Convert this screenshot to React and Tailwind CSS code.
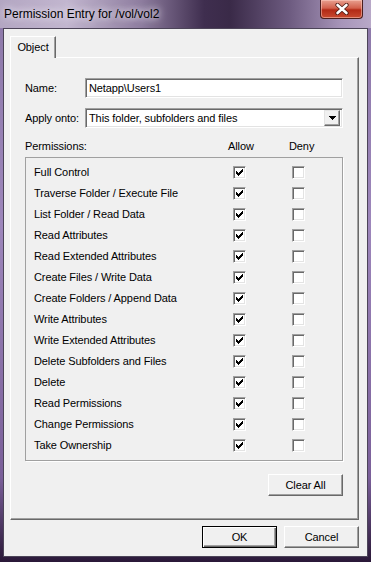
import React from "react";

const rows = [
  "Full Control",
  "Traverse Folder / Execute File",
  "List Folder / Read Data",
  "Read Attributes",
  "Read Extended Attributes",
  "Create Files / Write Data",
  "Create Folders / Append Data",
  "Write Attributes",
  "Write Extended Attributes",
  "Delete Subfolders and Files",
  "Delete",
  "Read Permissions",
  "Change Permissions",
  "Take Ownership",
];

// classic 7x7 check bitmap
const checkRows = [
  "......X",
  ".....XX",
  "X...XXX",
  "XX.XXX.",
  "XXXXX..",
  ".XXX...",
  "..X....",
];

function CheckBox({ checked }) {
  return (
    <div className="w-[13px] h-[13px] border border-t-[#a0a0a0] border-l-[#a0a0a0] border-r-white border-b-white bg-white shadow-[inset_1px_1px_0_#696969,inset_-1px_-1px_0_#e3e3e3] flex items-center justify-center">
      {checked && (
        <svg width="7" height="7" viewBox="0 0 7 7" shapeRendering="crispEdges">
          {checkRows.map((r, y) =>
            r.split("").map((c, x) =>
              c === "X" ? <rect key={`${x}-${y}`} x={x} y={y} width="1" height="1" fill="#000" /> : null
            )
          )}
        </svg>
      )}
    </div>
  );
}

function Button({ children, isDefault, className = "" }) {
  return (
    <div
      className={`h-[22px] w-[75px] flex items-center justify-center bg-[#f0f0f0] text-black ${
        isDefault
          ? "border border-[#000] shadow-[inset_1px_1px_0_#fff,inset_-1px_-1px_0_#696969,inset_-2px_-2px_0_#a0a0a0]"
          : "border border-t-white border-l-white border-r-[#696969] border-b-[#696969] shadow-[inset_-1px_-1px_0_#a0a0a0]"
      } ${className}`}
    >
      {children}
    </div>
  );
}

export default function App() {
  return (
    <div
      className="w-[371px] h-[562px] flex flex-col bg-[linear-gradient(180deg,#8c78a8_0%,#9d86bb_40%,#7a5f99_85%,#2a1838_100%)] text-[11px] tracking-[-0.1px] text-black"
      style={{ fontFamily: '"Liberation Sans", Arial, sans-serif' }}
    >
      {/* Title bar */}
      <div className="relative h-[28px] shrink-0 bg-[linear-gradient(90deg,#b3a6c2_0%,#c2b6cf_18%,#8e7d9f_38%,#3f2e4f_55%,#3a2a48_62%,#6d5b80_78%,#a795b9_92%,#b8a8c8_100%)]">
        <div className="absolute left-[4px] top-[6px] text-[12px] tracking-normal text-black leading-[16px] [text-shadow:0_0_6px_#e8e2ee,0_0_10px_#e8e2ee]">
          Permission Entry for /vol/vol2
        </div>
        <div className="absolute left-[320px] top-0 w-[43px] h-[19px] rounded-b-[4px] border border-t-0 border-[#4a1e1e] bg-[linear-gradient(180deg,#e8a090_0%,#d2604c_45%,#b32a16_55%,#c84a30_100%)] shadow-[inset_0_0_0_1px_rgba(255,210,200,0.5)] flex items-center justify-center">
          <svg width="14" height="12" viewBox="0 0 14 12">
            <path d="M2.5 2L11.5 10M11.5 2L2.5 10" stroke="#4a1a14" strokeWidth="4.2" strokeLinecap="round" />
            <path d="M2.5 2L11.5 10M11.5 2L2.5 10" stroke="#fff" strokeWidth="2.6" strokeLinecap="round" />
          </svg>
        </div>
      </div>

      {/* Client area */}
      <div className="flex-1 mx-[3px] mb-[5px] flex flex-col border border-[#4c4458] bg-[#f0f0f0] pl-[6px] pr-[8px] pt-[7px]">
        {/* Tab */}
        <div className="flex">
          <div className="relative z-10 -mb-[1px] w-[46px] h-[22px] flex items-center justify-center bg-[#f0f0f0] border border-b-0 border-t-white border-l-white border-r-[#696969] shadow-[inset_-1px_0_0_#a0a0a0]">
            Object
          </div>
        </div>

        {/* Tab panel */}
        <div className="h-[463px] flex flex-col border border-t-white border-l-white border-r-[#696969] border-b-[#696969] shadow-[inset_-1px_-1px_0_#a0a0a0] pl-[14px] pr-[15px]">
          <div className="mt-[20px] h-[20px] flex items-center">
            <div className="w-[60px]">Name:</div>
            <div className="flex-1 h-[20px] flex items-center bg-white border border-t-[#a0a0a0] border-l-[#a0a0a0] border-r-white border-b-white shadow-[inset_1px_1px_0_#696969,inset_-1px_-1px_0_#e3e3e3] pl-[3px]">
              Netapp\Users1
            </div>
          </div>

          <div className="mt-[10px] h-[20px] flex items-center">
            <div className="w-[60px]">Apply onto:</div>
            <div className="flex-1 h-[20px] flex items-center bg-white border border-t-[#a0a0a0] border-l-[#a0a0a0] border-r-white border-b-white shadow-[inset_1px_1px_0_#696969,inset_-1px_-1px_0_#e3e3e3] pl-[3px] pr-[2px]">
              <span className="flex-1">This folder, subfolders and files</span>
              <div className="w-[16px] h-[16px] flex items-center justify-center bg-[#f0f0f0] border border-t-[#e3e3e3] border-l-[#e3e3e3] border-r-[#696969] border-b-[#696969] shadow-[inset_-1px_-1px_0_#a0a0a0]">
                <svg width="7" height="4" viewBox="0 0 7 4" shapeRendering="crispEdges">
                  <path d="M0 0H7L3.5 4Z" fill="#000" />
                </svg>
              </div>
            </div>
          </div>

          <div className="mt-[10px] h-[16px] flex items-center">
            <div className="w-[203px]">Permissions:</div>
            <div className="w-[61px]">Allow</div>
            <div>Deny</div>
          </div>

          <div className="mt-[3px] h-[304px] border border-[#a0a0a0] shadow-[1px_1px_0_#fff] pt-[4px] pl-[8px]">
            {rows.map((r) => (
              <div key={r} className="h-[21px] flex items-center">
                <div className="w-[199px]">{r}</div>
                <CheckBox checked />
                <div className="w-[46px]" />
                <CheckBox />
              </div>
            ))}
          </div>

          <div className="mt-[13px] flex justify-end">
            <Button>Clear All</Button>
          </div>
        </div>

        <div className="mt-[6px] flex justify-end gap-[7px]">
          <Button isDefault>OK</Button>
          <Button>Cancel</Button>
        </div>
      </div>
    </div>
  );
}
